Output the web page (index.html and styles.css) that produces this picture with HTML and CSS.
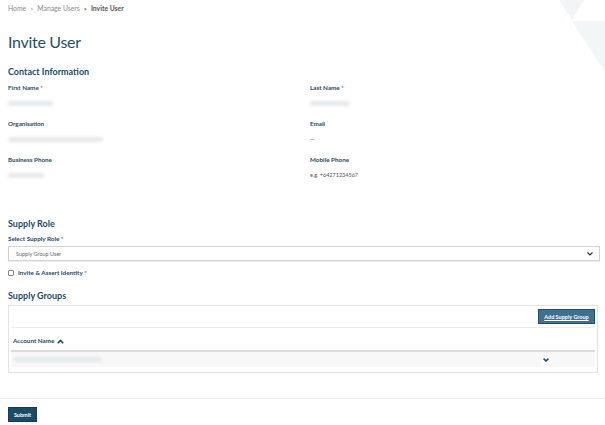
FILE: index.html
```html
<!DOCTYPE html>
<html lang="en">
<head>
  <meta charset="UTF-8" />
  <meta name="viewport" content="width=device-width, initial-scale=1">
  <title>Invite User</title>
  <link rel="stylesheet" href="styles.css">
</head>
<body>
  <!-- Decorative corner shapes -->
  <div class="corner">
    <svg width="46" height="72" viewBox="0 0 46 72">
      <polygon points="0,0 25,0 13,20" fill="#f1f5f6" />
      <polygon points="13,21 46,21 46,72" fill="#f3f6f7" />
    </svg>
  </div>

  <div class="page">
    <nav class="breadcrumb">
      <span>Home</span><span class="sep">&gt;</span><span>Manage Users</span><span class="sep bold">&gt;</span><span class="current">Invite User</span>
    </nav>

    <h1 class="title">Invite User</h1>

    <h2 class="section">Contact Information</h2>
    <div class="fields">
      <div class="field">
        <div class="label">First Name <span class="req">*</span></div>
        <div class="value"><span class="blur" style="width:45px"></span></div>
      </div>
      <div class="field">
        <div class="label">Last Name <span class="req">*</span></div>
        <div class="value"><span class="blur" style="width:40px"></span></div>
      </div>
      <div class="field">
        <div class="label">Organisation</div>
        <div class="value"><span class="blur" style="width:95px"></span></div>
      </div>
      <div class="field">
        <div class="label">Email</div>
        <div class="value">—</div>
      </div>
      <div class="field">
        <div class="label">Business Phone</div>
        <div class="value"><span class="blur" style="width:36px"></span></div>
      </div>
      <div class="field">
        <div class="label">Mobile Phone</div>
        <div class="value hint">e.g. +64271234567</div>
      </div>
    </div>

    <h2 class="section role-head">Supply Role</h2>
    <div class="label">Select Supply Role <span class="req">*</span></div>
    <div class="select">
      <span>Supply Group User</span>
      <svg width="6" height="4" viewBox="0 0 6 4"><path d="M0.5 0.5 L3 3 L5.5 0.5" fill="none" stroke="#333" stroke-width="1.2" /></svg>
    </div>

    <label class="check">
      <span class="box"></span>
      <span class="label">Invite &amp; Assert Identity <span class="req">*</span></span>
    </label>

    <h2 class="section groups-head">Supply Groups</h2>
    <div class="groups">
      <div class="toolbar">
        <button class="add-btn">Add Supply Group</button>
      </div>
      <div class="col-head">
        <span class="label">Account Name</span>
        <svg width="7" height="5" viewBox="0 0 7 5"><path d="M0.8 4.2 L3.5 1.4 L6.2 4.2" fill="none" stroke="#1b4a63" stroke-width="1.6" /></svg>
      </div>
      <div class="row">
        <span class="blur" style="width:88px"></span>
        <span class="expand">
          <svg width="6" height="4" viewBox="0 0 6 4"><path d="M0.6 0.6 L3 3 L5.4 0.6" fill="none" stroke="#1b4a63" stroke-width="1.5" /></svg>
        </span>
      </div>
    </div>
  </div>

  <footer class="actions">
    <button class="submit">Submit</button>
  </footer>
</body>
</html>
```

FILE: styles.css
```css
/* Base */
body {
  margin: 0;
  font-family: Lato, 'Open Sans', sans-serif;
  background: #fff;
  color: #1b4a63;
  position: relative;
}
.corner {
  position: absolute;
  top: 0;
  right: 0;
  line-height: 0;
  z-index: -1;
}
.page {
  padding: 4px 5px 0 8px;
}

/* Breadcrumb */
.breadcrumb {
  font-size: 6.8px;
  line-height: 9px;
  color: #8a8a8a;
}
.breadcrumb .sep {
  margin: 0 4px;
  font-size: 5.5px;
}
.breadcrumb .bold,
.breadcrumb .current {
  font-weight: 700;
  color: #555;
}

/* Headings */
.title {
  margin: 18px 0 0;
  font-size: 16px;
  line-height: 20px;
  font-weight: 400;
  color: #1f4e68;
  letter-spacing: -0.3px;
}
.section {
  margin: 14px 0 0;
  font-size: 9px;
  line-height: 12px;
  font-weight: 700;
  color: #1b4a63;
}
.label {
  font-size: 6.3px;
  line-height: 8px;
  font-weight: 700;
  color: #1f4a5f;
}
.req {
  color: #e0454a;
}

/* Contact fields */
.fields {
  display: grid;
  grid-template-columns: 302px 1fr;
  margin-top: 6px;
}
.field {
  height: 36px;
}
.value {
  margin-top: 7px;
  height: 8px;
  font-size: 6px;
  line-height: 8px;
  color: #444;
  display: flex;
  align-items: center;
}
.value.hint {
  font-size: 5.5px;
  color: #555;
}
.blur {
  display: inline-block;
  height: 5px;
  background: #e6e8ea;
  border-radius: 3px;
  filter: blur(1.5px);
}

/* Supply role */
.role-head {
  margin-top: 26px;
  margin-bottom: 5px;
}
.select {
  margin-top: 3px;
  height: 13px;
  border: 1px solid #d2d2d2;
  box-shadow: 0 1px 1px rgba(0,0,0,0.06);
  display: flex;
  align-items: center;
  justify-content: space-between;
  padding: 0 6px 0 7px;
  font-size: 5.5px;
  color: #666;
}
.check {
  display: flex;
  align-items: center;
  gap: 4px;
  margin-top: 8px;
}
.check .box {
  width: 4px;
  height: 4px;
  border: 1px solid #888;
  border-radius: 1px;
}
.groups-head {
  margin-top: 13px;
}

/* Supply groups table */
.groups {
  margin: 3px 2px 0 0;
  border: 1px solid #e3e3e3;
  padding: 0 2px 5px 2px;
}
.toolbar {
  display: flex;
  justify-content: flex-end;
  padding: 3px 0 3px;
  border-bottom: 1px solid #ececec;
}
.add-btn {
  width: 57px;
  height: 15px;
  padding: 0;
  border: 1px solid #1d4f69;
  background: #3d7190;
  color: #fff;
  font-family: inherit;
  font-size: 5.5px;
  font-weight: 700;
  text-decoration: underline;
}
.col-head {
  display: flex;
  align-items: center;
  gap: 3px;
  padding: 9px 2px 5px;
}
.row {
  height: 15px;
  border-top: 2px solid #dcdcdc;
  background: #f8f8f8;
  display: flex;
  align-items: center;
  justify-content: space-between;
  padding: 0 44px 0 3px;
}
.expand {
  width: 10px;
  height: 10px;
  background: #fff;
  display: flex;
  align-items: center;
  justify-content: center;
}

/* Footer actions */
.actions {
  margin-top: 25px;
  border-top: 1px solid #ececec;
  padding: 8px 8px;
}
.submit {
  display: block;
  width: 29px;
  height: 15px;
  padding: 0;
  border: 1px solid #143e55;
  background: #1b4c66;
  color: #fff;
  font-family: inherit;
  font-size: 5.5px;
  font-weight: 700;
}
```
